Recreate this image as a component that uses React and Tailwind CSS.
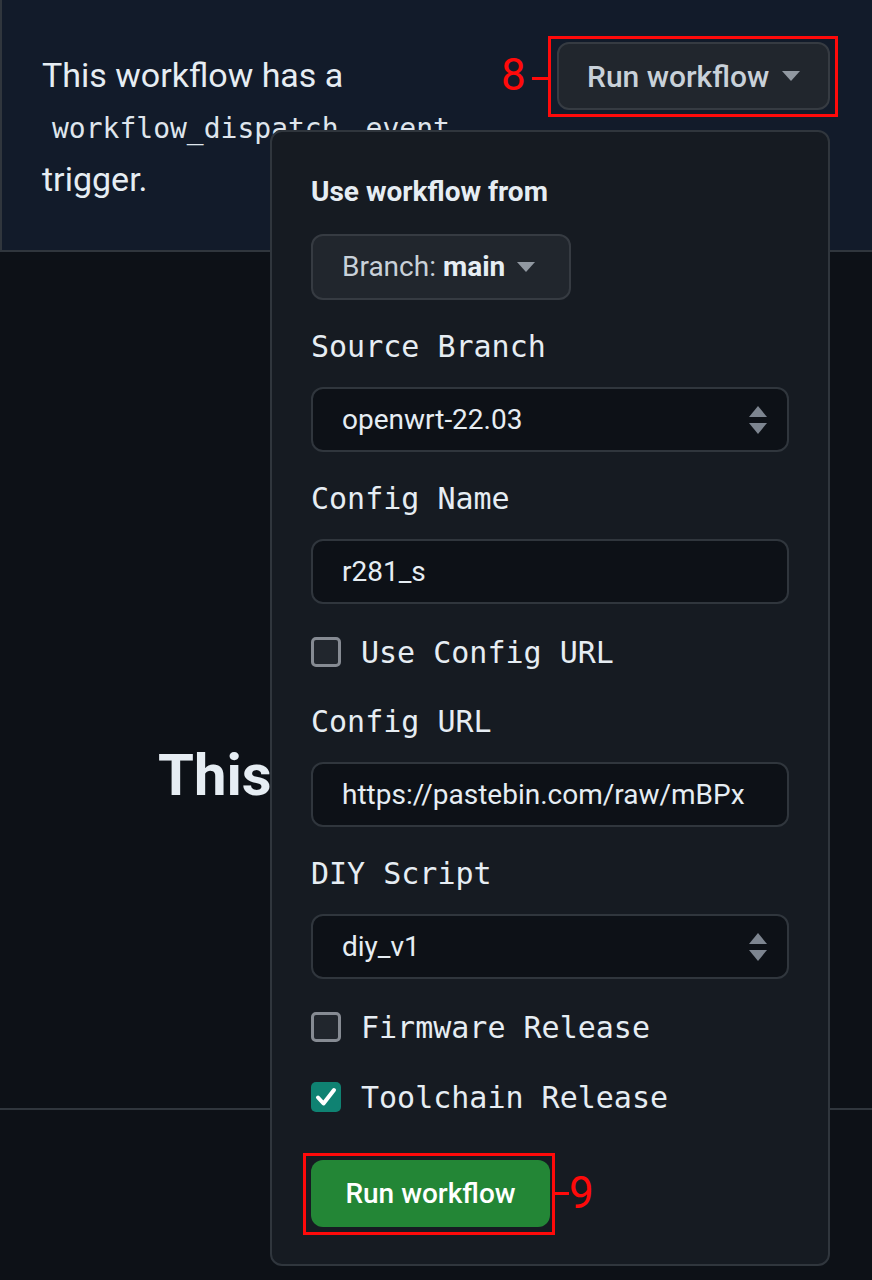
const SANS = "font-['Roboto',_'Liberation_Sans',_sans-serif]";
const MONO = "font-['DejaVu_Sans_Mono',_'Liberation_Mono',_monospace]";

function Caret({ className = '' }) {
  return (
    <svg width="18" height="10" viewBox="0 0 18 10" className={className}>
      <path d="M0 0h18L9 10z" fill="currentColor" />
    </svg>
  );
}

function UpDown() {
  return (
    <svg width="18" height="28" viewBox="0 0 18 28" className="text-[#7d8590]">
      <path d="M9 0l9 11H0z" fill="currentColor" />
      <path d="M0 17h18L9 28z" fill="currentColor" />
    </svg>
  );
}

function Label({ children, className = '' }) {
  return (
    <div className={`${MONO} text-[30px] leading-[40px] text-[#e6edf3] ${className}`}>{children}</div>
  );
}

function Field({ value, select, className = '' }) {
  return (
    <div
      className={`flex h-[65px] items-center justify-between rounded-[12px] border-2 border-[#30363d] bg-[#0d1117] pl-[29px] pr-[20px] ${className}`}
    >
      <span className={`${SANS} text-[28px] text-[#e6edf3]`}>{value}</span>
      {select && <UpDown />}
    </div>
  );
}

function Check({ label, checked, className = '' }) {
  return (
    <div className={`flex h-[40px] items-center gap-[20px] ${className}`}>
      {checked ? (
        <div className="flex h-[30px] w-[30px] items-center justify-center rounded-[5px] bg-[#0f8272]">
          <svg width="22" height="20" viewBox="0 0 22 20">
            <path d="M3 10.5l5.5 6L19 3" fill="none" stroke="#fff" strokeWidth="4" strokeLinecap="round" strokeLinejoin="round" />
          </svg>
        </div>
      ) : (
        <div className="h-[30px] w-[30px] rounded-[5px] border-[3px] border-[#868b93] bg-[#21262d]" />
      )}
      <span className={`${MONO} text-[30px] text-[#e6edf3]`}>{label}</span>
    </div>
  );
}

export default function App() {
  return (
    <div className={`relative min-h-[1280px] w-[872px] overflow-hidden bg-[#0d1117] ${SANS}`}>
      {/* banner */}
      <div className="flex h-[252px] justify-between border-b-2 border-l-2 border-[#30363d] bg-[#121b2a] pl-[40px] pr-[42px]">
        <p className="mt-[50px] w-[440px] text-[34px] leading-[51px] text-[#e6edf3]">
          This workflow has a{' '}
          <code className={`${MONO} pl-[10px] text-[28px] text-[#dfe5ec]`}>
            workflow_dispatch<span className="ml-[27px]">event</span>
          </code>{' '}
          trigger.
        </p>
        <div className="mt-[42px] flex h-[68px] w-[273px] items-center justify-between rounded-[12px] border-2 border-[#363b42] bg-[#21262d] pl-[28px] pr-[28px]">
          <span className="text-[30px] font-medium text-[#c9d1d9]">Run workflow</span>
          <Caret className="text-[#9198a1]" />
        </div>
      </div>

      {/* empty state */}
      <div className="h-[858px] border-b-2 border-[#30363d] pl-[158px] pt-[488px]">
        <div className="w-[640px] overflow-hidden whitespace-nowrap text-[58px] font-bold leading-[70px] text-[#e6edf3]">
          This workflow has no runs yet.
        </div>
      </div>

      {/* annotation 8 */}
      <div className="absolute left-[548px] top-[36px] h-[81px] w-[290px] border-[3px] border-[#ff0a0a]" />
      <div className="absolute left-[501px] top-[50px] text-[44px] leading-[50px] text-[#ff0a0a]">8</div>
      <div className="absolute left-[532px] top-[77px] h-[3px] w-[16px] bg-[#ff0a0a]" />

      {/* dropdown */}
      <div className="absolute left-[270px] top-[130px] flex h-[1136px] w-[560px] flex-col rounded-[12px] border-2 border-[#30363d] bg-[#161b22] px-[39px] pt-[40px]">
        <div className="text-[28px] font-bold leading-[40px] text-[#e6edf3]">Use workflow from</div>
        <div className="mt-[22px] flex h-[66px] w-[260px] items-center gap-[12px] rounded-[12px] border-2 border-[#363b42] bg-[#21262d] pl-[29px]">
          <span className="text-[28px] text-[#c9d1d9]">
            Branch: <span className="font-bold text-[#e6edf3]">main</span>
          </span>
          <Caret className="text-[#9198a1]" />
        </div>

        <Label className="mt-[27px]">Source Branch</Label>
        <Field className="mt-[20px]" value="openwrt-22.03" select />

        <Label className="mt-[27px]">Config Name</Label>
        <Field className="mt-[20px]" value="r281_s" />

        <Check className="mt-[28px]" label="Use Config URL" />

        <Label className="mt-[30px]">Config URL</Label>
        <Field className="mt-[20px]" value="https://pastebin.com/raw/mBPx" />

        <Label className="mt-[27px]">DIY Script</Label>
        <Field className="mt-[20px]" value="diy_v1" select />

        <Check className="mt-[28px]" label="Firmware Release" />
        <Check className="mt-[30px]" label="Toolchain Release" checked />

        <div className="relative mt-[43px] self-start">
          <div className="flex h-[67px] w-[239px] items-center justify-center rounded-[12px] bg-[#238636] text-[28px] font-medium text-white">
            Run workflow
          </div>
          <div className="absolute -left-[8px] -top-[7px] h-[82px] w-[252px] border-[3px] border-[#ff0a0a]" />
          <div className="absolute left-[244px] top-[32px] h-[3px] w-[14px] bg-[#ff0a0a]" />
          <div className="absolute left-[258px] top-[8px] text-[44px] leading-[50px] text-[#ff0a0a]">9</div>
        </div>
      </div>
    </div>
  );
}
